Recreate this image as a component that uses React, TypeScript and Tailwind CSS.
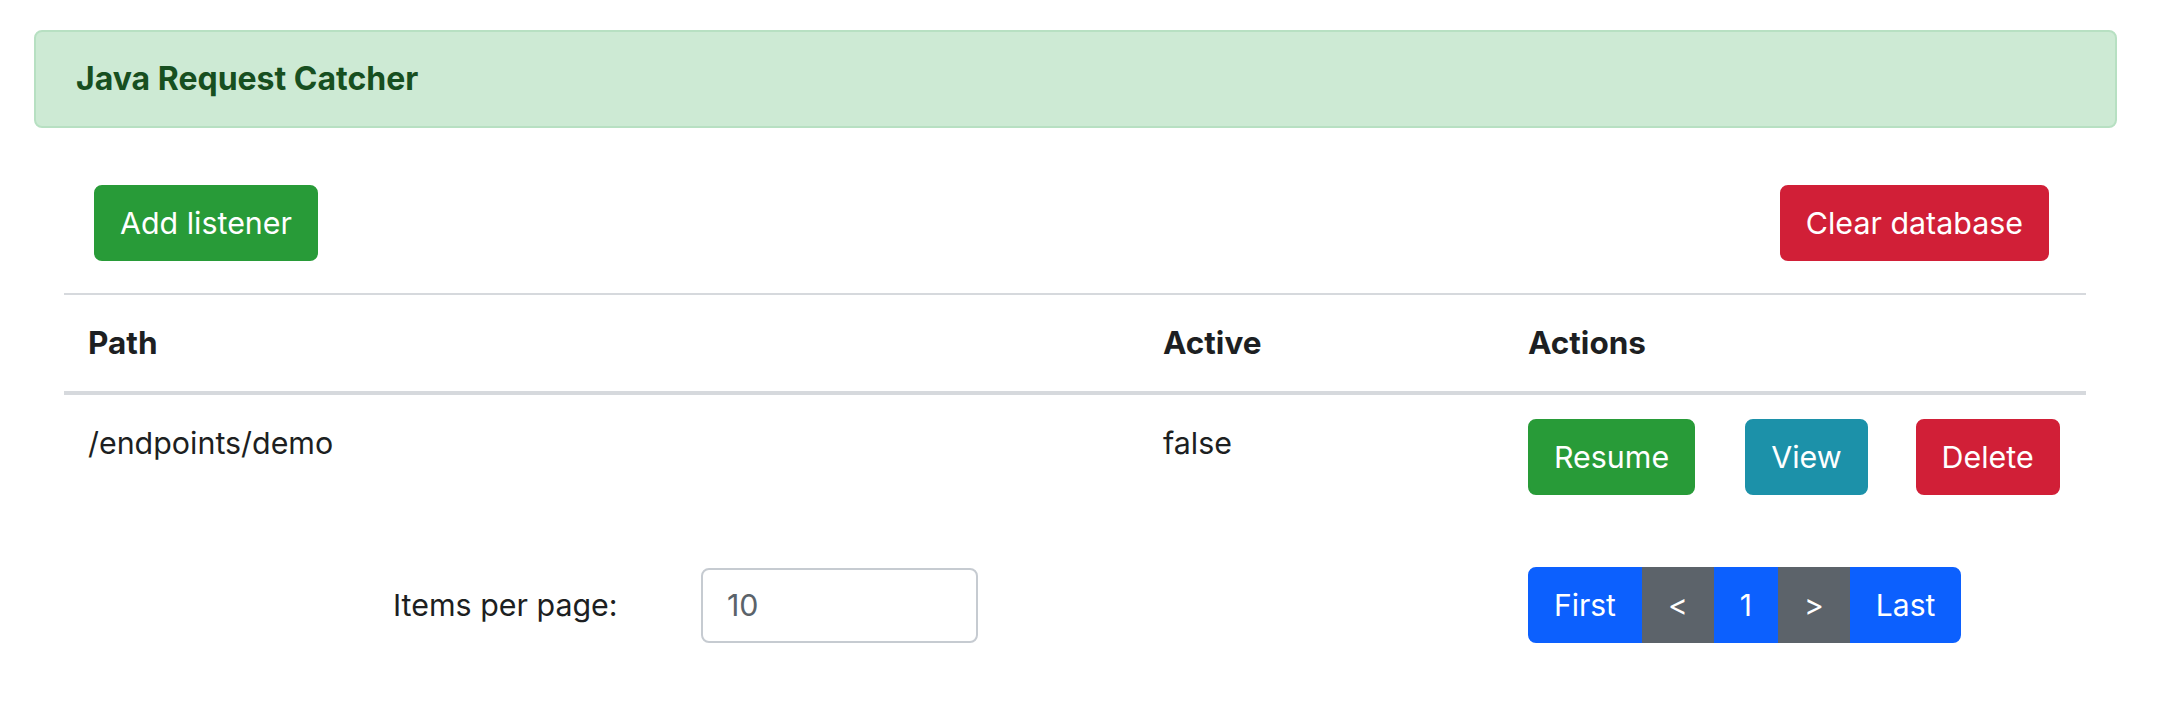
import React from 'react';

interface Listener {
  path: string;
  active: boolean;
}

const listeners: Listener[] = [{ path: '/endpoints/demo', active: false }];

const btn = 'rounded-[8px] border-2 px-[24px] py-[12px] text-white leading-[48px] whitespace-nowrap';

const PageButton: React.FC<{ label: string; dark?: boolean; first?: boolean; last?: boolean }> = ({ label, dark, first, last }) => (
  <button
    className={
      (dark ? 'bg-[#5c636a] border-[#5c636a] ' : 'bg-[#0c60fe] border-[#0c60fe] ') +
      (first ? 'rounded-l-[8px] ' : '') +
      (last ? 'rounded-r-[8px] ' : '') +
      'border-2 px-[24px] py-[12px] text-[30px] text-white leading-[48px]'
    }
  >
    {label}
  </button>
);

const App: React.FC = () => {
  return (
    <div className="min-h-screen bg-white font-['Inter','Liberation_Sans',sans-serif] text-[30.4px] leading-[48px] text-[#1d1f22]">
      <div className="pt-[30px] pl-[34px] pr-[55px]">
        <div className="rounded-[8px] border-2 border-[#b7e0c2] bg-[#cdead4] px-[40px] py-[23px] text-[32px] font-bold text-[#174f20]">
          Java Request Catcher
        </div>
      </div>

      <div className="pl-[64px] pr-[86px]">
        <div className="mt-[57px] mb-[32px] flex justify-between pl-[30px] pr-[37px]">
          <button className={btn + ' bg-[#289b38] border-[#289b38]'}>Add listener</button>
          <button className={btn + ' bg-[#d11f37] border-[#d11f37]'}>Clear database</button>
        </div>

        <table className="w-full border-collapse">
          <thead>
            <tr className="border-t-2 border-b-4 border-[#d6d9dd] text-[31.5px]">
              <th className="w-[1075px] p-[24px] text-left font-bold">Path</th>
              <th className="w-[365px] p-[24px] text-left font-bold">Active</th>
              <th className="p-[24px] text-left font-bold">Actions</th>
            </tr>
          </thead>
          <tbody>
            {listeners.map(l => (
              <tr key={l.path}>
                <td className="p-[24px] align-top">{l.path}</td>
                <td className="p-[24px] align-top">{String(l.active)}</td>
                <td className="p-[24px] align-top">
                  <div className="flex">
                    <button className={btn + ' mr-[50px] bg-[#289b38] border-[#289b38]'}>{l.active ? 'Pause' : 'Resume'}</button>
                    <button className={btn + ' mr-[48px] bg-[#1c91a9] border-[#1c91a9]'}>View</button>
                    <button className={btn + ' bg-[#d11f37] border-[#d11f37]'}>Delete</button>
                  </div>
                </td>
              </tr>
            ))}
          </tbody>
        </table>
      </div>

      <div className="mt-[48px] flex items-center pl-[393px]">
        <span className="w-[308px]">Items per page:</span>
        <input
          readOnly
          value="10"
          className="h-[75px] w-[277px] rounded-[8px] border-2 border-[#c6cbd1] px-[24px] text-[#5b636a] outline-none"
        />
        <div className="ml-[550px] flex">
          <PageButton label="First" first />
          <PageButton label="<" dark />
          <PageButton label="1" />
          <PageButton label=">" dark />
          <PageButton label="Last" last />
        </div>
      </div>
    </div>
  );
};

export default App;
